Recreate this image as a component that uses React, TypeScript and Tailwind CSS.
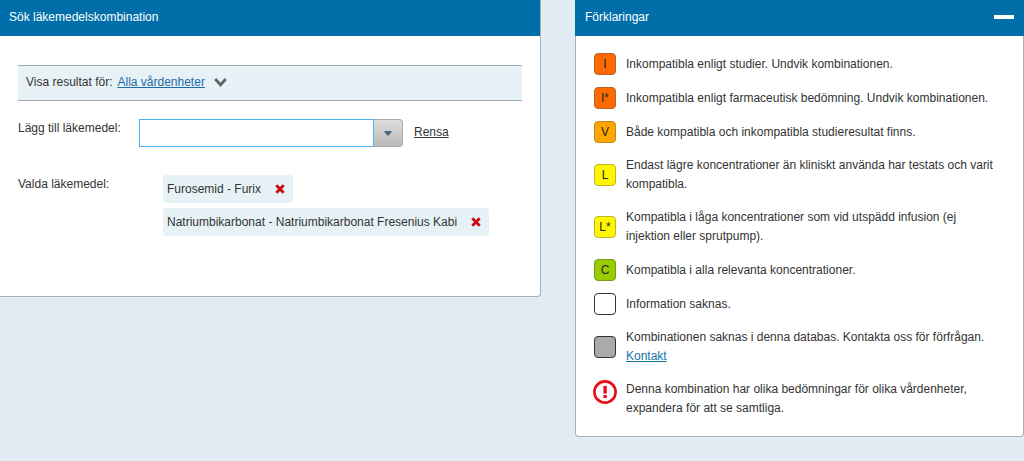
import { useState } from 'react';

type LegendItem = {
    mark: string;
    box: string;
    text: string;
    link?: string;
    warning?: boolean;
};

const legend: LegendItem[] = [
    { mark: 'I', box: 'bg-[#ff6a00] border-[#b8632a]', text: 'Inkompatibla enligt studier. Undvik kombinationen.' },
    { mark: 'I*', box: 'bg-[#ff6a00] border-[#b8632a]', text: 'Inkompatibla enligt farmaceutisk bedömning. Undvik kombinationen.' },
    { mark: 'V', box: 'bg-[#ffa500] border-[#c08a20]', text: 'Både kompatibla och inkompatibla studieresultat finns.' },
    { mark: 'L', box: 'bg-[#fff600] border-[#bdb52a]', text: 'Endast lägre koncentrationer än kliniskt använda har testats och varit kompatibla.' },
    { mark: 'L*', box: 'bg-[#fff600] border-[#bdb52a]', text: 'Kompatibla i låga koncentrationer som vid utspädd infusion (ej injektion eller sprutpump).' },
    { mark: 'C', box: 'bg-[#99cc00] border-[#769a1c]', text: 'Kompatibla i alla relevanta koncentrationer.' },
    { mark: '', box: 'bg-white border-[#333333]', text: 'Information saknas.' },
    { mark: '', box: 'bg-[#aaaaaa] border-[#333333]', text: 'Kombinationen saknas i denna databas. Kontakta oss för förfrågan.', link: 'Kontakt' },
    { mark: '', box: '', text: 'Denna kombination har olika bedömningar för olika vårdenheter, expandera för att se samtliga.', warning: true },
];

const WarningIcon = () => (
    <svg width="24" height="24" viewBox="0 0 24 24" fill="none" className="-ml-px shrink-0">
        <circle cx="12" cy="12" r="10.6" stroke="#ee0a14" strokeWidth="2.6" />
        <path d="M10.4 6h3.4v7.6h-3.4z" fill="#ee0a14" />
        <path d="M10.4 15h3.4v3h-3.4z" fill="#ee0a14" />
    </svg>
);

const SearchPanel = () => {
    const [query, setQuery] = useState('');
    const [drugs, setDrugs] = useState(['Furosemid - Furix', 'Natriumbikarbonat - Natriumbikarbonat Fresenius Kabi']);

    return (
        <section className="min-w-0 border-r border-b border-[#a9b0b6] rounded-br-sm bg-white">
            <h2 className="flex h-9 items-center bg-[#006fa9] px-[9px] pb-0.5 text-white">Sök läkemedelskombination</h2>

            <div className="px-[18px] pt-[29px] pb-[60px]">
                <div className="flex h-9 items-center border-y border-[#a3adb5] bg-[#e7f2f7] px-2 pb-0.5">
                    <span className="mr-[5px]">Visa resultat för:</span>
                    <a href="#enheter" className="text-[#1b6ca8] underline">Alla vårdenheter</a>
                    <svg width="13" height="9" viewBox="0 0 13 9" fill="none" className="ml-[9px]">
                        <path d="M1.2 1l5.3 5.8L11.8 1" stroke="#606468" strokeWidth="2.8" />
                    </svg>
                </div>

                <div className="mt-[18px] flex">
                    <label htmlFor="drug" className="w-[121px] shrink-0">Lägg till läkemedel:</label>
                    <input
                        id="drug"
                        type="text"
                        value={query}
                        onChange={(e) => setQuery(e.target.value)}
                        className="h-7 w-[235px] min-w-0 border border-[#45b3f0] bg-white px-2 outline-none"
                    />
                    <button
                        type="button"
                        aria-label="Visa läkemedel"
                        className="flex h-7 w-[29px] shrink-0 items-center justify-center rounded-r-sm border border-l-0 border-[#aaaaaa] bg-linear-to-b from-[#dddddd] to-[#bababa]"
                    >
                        <svg width="8" height="5" viewBox="0 0 8 5">
                            <path d="M.5 0h7v1L4.6 4.5H3.4L.5 1z" fill="#4b6478" />
                        </svg>
                    </button>
                    <button type="button" onClick={() => setQuery('')} className="ml-[11px] self-center pb-0.5 underline">Rensa</button>
                </div>

                <div className="mt-7 flex">
                    <span className="w-[145px] shrink-0">Valda läkemedel:</span>
                    <ul className="flex flex-col items-start gap-[5px]">
                        {drugs.map((drug) => (
                            <li key={drug} className="flex h-7 items-center gap-[14px] rounded-[3px] bg-[#e7f2f7] pr-2 pl-1">
                                <span>{drug}</span>
                                <button
                                    type="button"
                                    aria-label={`Ta bort ${drug}`}
                                    onClick={() => setDrugs(drugs.filter((d) => d !== drug))}
                                >
                                    <svg width="10" height="10" viewBox="0 0 10 10" fill="none" stroke="#c90813" strokeWidth="2.8">
                                        <path d="M1.3 1.3l7.4 7.4M8.7 1.3L1.3 8.7" />
                                    </svg>
                                </button>
                            </li>
                        ))}
                    </ul>
                </div>
            </div>
        </section>
    );
};

const LegendPanel = () => {
    const [open, setOpen] = useState(true);

    return (
        <section className="min-w-0 rounded-b-sm border-x border-b border-[#a9b0b6] bg-white">
            <div className="-mx-px flex h-9 items-center justify-between bg-[#006fa9] px-[10px] pb-0.5 text-white">
                <h2>Förklaringar</h2>
                <button type="button" aria-label="Visa eller dölj" onClick={() => setOpen(!open)} className="flex h-5 items-center">
                    <span className="h-1 w-5 bg-white"></span>
                </button>
            </div>

            {open && (
                <ul className="py-[11px] pr-6 pl-[18px]">
                    {legend.map((item) => (
                        <li key={item.text} className="flex min-h-[34px] items-center py-[7px]">
                            {item.warning ? (
                                <div className="w-8 shrink-0 self-start">
                                    <WarningIcon />
                                </div>
                            ) : (
                                <div className="-my-1 w-8 shrink-0">
                                    <span className={`flex size-[22px] items-center justify-center rounded-sm border text-[#222222] ${item.box}`}>
                                        {item.mark}
                                    </span>
                                </div>
                            )}
                            <p>
                                {item.text}
                                {item.link && (
                                    <>
                                        {' '}
                                        <a href="#kontakt" className="text-[#1074a8] underline">{item.link}</a>
                                    </>
                                )}
                            </p>
                        </li>
                    ))}
                </ul>
            )}
        </section>
    );
};

const App = () => {
    return (
        <main className="grid min-h-screen grid-cols-[541fr_449fr] items-start gap-[34px] bg-[#e1ecf5] font-['Liberation_Sans',Arial,sans-serif] text-[12px] leading-[19px] text-[#333333]">
            <SearchPanel />
            <LegendPanel />
        </main>
    );
};

export default App;
